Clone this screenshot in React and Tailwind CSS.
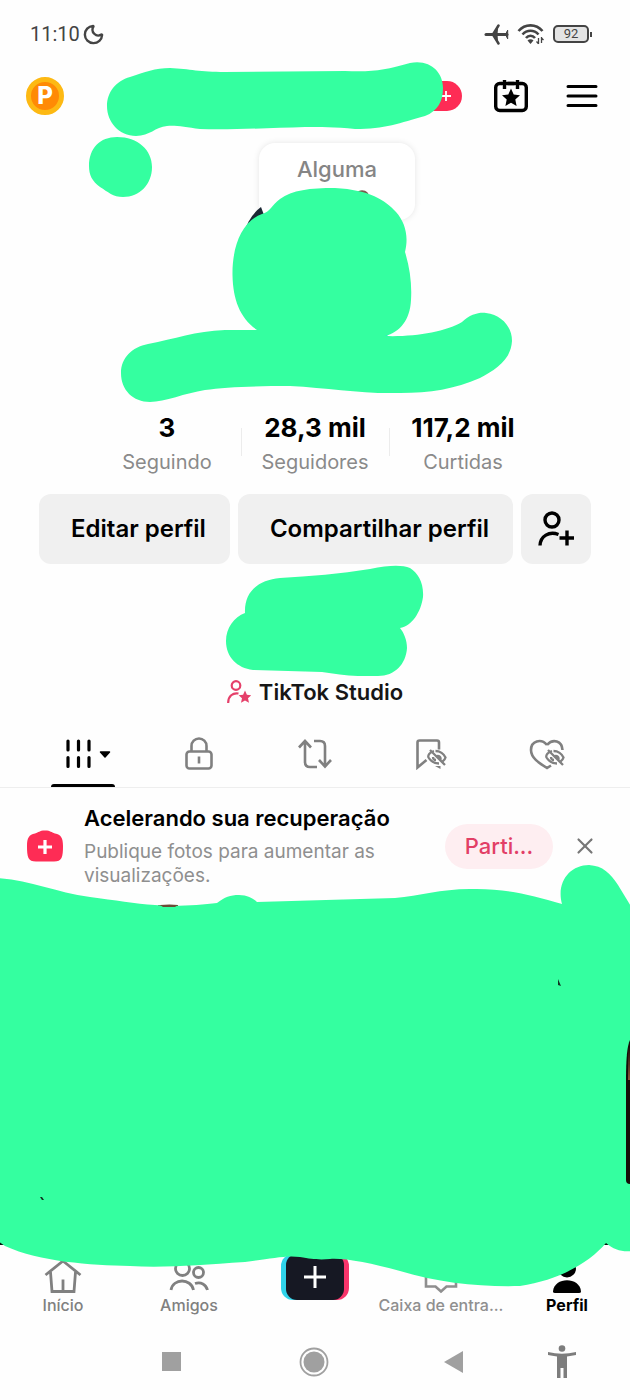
import { useState } from 'react';
import { Moon, X } from 'lucide-react';

const stats = [
  { value: '3', label: 'Seguindo' },
  { value: '28,3 mil', label: 'Seguidores' },
  { value: '117,2 mil', label: 'Curtidas' },
];

function StatusBar() {
  return (
    <div className="flex h-[66px] items-center justify-between pt-[2px] pl-[30px] pr-[38px] text-[#444]">
      <div className="flex items-center gap-[2px]">
        <span className="font-[Roboto] text-[20px]">11:10</span>
        <Moon size={23} strokeWidth={2.5} />
      </div>
      <div className="flex items-center gap-2">
        <svg width="25" height="21" viewBox="0 0 25 21" fill="none" stroke="currentColor" strokeLinecap="round" strokeLinejoin="round">
          <path d="M2 10.5h21" strokeWidth="3" />
          <path d="M14.5 1.5L9 10.5l5.500 9" strokeWidth="2.500" />
          <path d="M14.5 2v17L10 10.500z" fill="currentColor" stroke="none" opacity="0" />
          <path d="M13.5 3L8.500 10.500l5 7.500-.5-7.500z" fill="currentColor" strokeWidth="1" />
          <path d="M23.500 6.500l-2 4 2 4z" fill="currentColor" strokeWidth="1" />
        </svg>
        <svg width="28" height="22" viewBox="0 0 28 22" fill="none" stroke="currentColor" strokeWidth="2.600">
          <path d="M1.500 8C8 0.500 19 0.500 25.500 8M5.500 11.500C10 6.500 17 6.500 21.500 11.500M9 15c2.500-3 6.500-3 9 0" />
          <path d="M10.500 17.500a4 4 0 0 1 6 0l-3 3.500z" fill="currentColor" stroke="none" />
          <path d="M21.500 15v6M24.500 14v6M19.500 18.500l2 2.300M24.500 15l2 2" strokeWidth="1.300" />
        </svg>
        <div className="flex items-center gap-px">
          <div className="flex h-[18px] w-9 items-center justify-center rounded-[5px] border-2 border-[#444] bg-[#e4e4e4] font-[Roboto] text-[13px]">
            92
          </div>
          <div className="h-[5px] w-[2px] bg-[#444]" />
        </div>
      </div>
    </div>
  );
}

function Header() {
  return (
    <header className="flex h-[60px] items-center justify-between pl-[26px] pr-8">
      <div className="flex h-[38px] w-[38px] items-center justify-center rounded-full border-[5px] border-[#fdb913] bg-[#ff8a05] text-[24px] font-extrabold text-white">
        P
      </div>
      <div className="flex items-center">
        <div className="mr-8 flex h-[30px] w-12 items-center justify-end rounded-full bg-[#fe2c55] pr-[10px] text-white">
          <svg width="12" height="12" viewBox="0 0 12 12" stroke="currentColor" strokeWidth="1.800">
            <path d="M6 1v10M1 6h10" />
          </svg>
        </div>
        <button aria-label="Calendário" className="mr-[38px]">
          <svg width="34" height="34" viewBox="0 0 34 34" fill="none" stroke="#000" strokeWidth="3.400">
            <rect x="1.700" y="4.500" width="30.600" height="27" rx="4" />
            <path d="M10.500 0v11M23.500 0v11" stroke="#fefefe" strokeWidth="6" />
            <path d="M7 4.500h20" />
            <path d="M10.500 1v9M23.500 1v9" />
            <path d="M17 9.500l2.700 6 6.300.7-4.700 4.300 1.300 6.500-5.600-3.300-5.600 3.300 1.300-6.500L8 16.200l6.300-.7z" fill="#000" stroke="none" />
          </svg>
        </button>
        <button aria-label="Menu">
          <svg width="32" height="26" viewBox="0 0 32 26" stroke="#000" strokeWidth="3" strokeLinecap="round">
            <path d="M2 3.500h28M2 13h28M2 22.500h28" />
          </svg>
        </button>
      </div>
    </header>
  );
}

function TopScribble() {
  return (
    <svg
      className="pointer-events-none absolute left-1/2 top-0 h-[410px] w-[630px] -translate-x-1/2"
      viewBox="0 0 630 410"
      fill="#34ffa0"
    >
      <path d="M244 233c3-11 9-20 17-26l3 8-17 18z" fill="#1b2733" />
      <path d="M356 193c3-3 8-4 12 0l1 4h-12z" fill="#7a5a4c" />
      <path d="M375 334h14l-4 4h-12z" fill="#20d5ec" />
      <path d="M107 106C107 92 116 81 130 77C145 72 155 68 170 68C190 69 200 72 225 72L345 71C375 72 385 70 410 63C430 59 443 72 443 88C443 101 438 111 425 116C400 123 385 129 355 129C335 127 320 127 305 127C270 128 230 130 200 129C185 127 175 125 167 126C155 127 150 136 136 136C119 136 107 122 107 106Z" />
      <path d="M89 166C89 148 100 137 117 137C138 137 152 150 152 167C152 184 140 197 123 197C113 197 108 192 100 187C92 181 89 175 89 166Z" />
      <path d="M232.500 275C232 250 240 222 262 214C270 212 272 205 280 199C292 190 310 188 335 188C370 190 385 200 396 212C405 222 409 236 405 252C410 268 412 285 411 300C410 320 400 332 385 336C415 337 445 332 462 322C470 314 480 312 486 313C502 315 512 327 512 341C511 360 495 370 480 378C455 389 430 393 400 393C360 394 330 388 290 386C255 386 225 387 205 390C185 393 165 402 150 402C133 402 121 390 121 373C121 358 132 347 148 344C175 339 195 331 225 330L257 330C240 318 233 300 232.500 275Z" />
    </svg>
  );
}

function Stats() {
  return (
    <div className="mx-auto flex w-[444px] max-w-full">
      {stats.map((stat, i) => (
        <div key={stat.label} className="relative flex-1 text-center">
          <p className="text-[26px] leading-9 font-bold">{stat.value}</p>
          <p className="text-[20px] leading-8 text-[#8a8a8a]">{stat.label}</p>
          {i > 0 && <div className="absolute top-[18px] left-0 h-7 w-px bg-[#ececec]" />}
        </div>
      ))}
    </div>
  );
}

// crossed-out eye sitting on the corner of the saved and liked icons
function HiddenEye() {
  return (
    <g strokeWidth="2.300">
      <path d="M19 13C15 14 12.500 17 13.500 19.500C16 23.500 20 25.500 24 25.500" />
      <path d="M20.500 13C25 13 29 16 30.500 19.500C30 21.500 29 22.500 27.500 23.500" />
      <path d="M15 12L30 27M22 18C24 17.500 26 19 25.500 21.500M18 19c0 2 1.500 3 3 3" />
    </g>
  );
}

function Tabs() {
  const [active, setActive] = useState('Publicações');
  const tabs = [
    {
      name: 'Publicações',
      icon: (
        <svg width="46" height="30" viewBox="0 0 46 30" stroke="#000" strokeWidth="3.200" strokeLinecap="round">
          <path d="M3 2v9M13.500 2v9M24 2v9M3 18.500v9M13.500 18.500v9M24 18.500v9" />
          <path d="M35.500 13h9l-4.500 5z" fill="#000" strokeWidth="1.500" strokeLinejoin="round" />
        </svg>
      ),
    },
    {
      name: 'Privado',
      icon: (
        <svg width="28" height="34" viewBox="0 0 28 34" fill="none" stroke="#808080" strokeWidth="2.600">
          <rect x="1.500" y="14.500" width="25" height="17" rx="3" />
          <path d="M6.500 14V9a7.500 7.500 0 0 1 15 0v5M14 19.500v7" />
        </svg>
      ),
    },
    {
      name: 'Republicações',
      icon: (
        <svg width="34" height="32" viewBox="0 0 34 32" fill="none" stroke="#808080" strokeWidth="2.600">
          <path d="M1 9.500L7 3l6 6.500M7 4v20q0 5 5 5h7M16 3h6q5 0 5 5v20M21 22l6 6.500 6-6.500" />
        </svg>
      ),
    },
    {
      name: 'Salvos',
      icon: (
        <svg width="32" height="32" viewBox="0 0 32 32" fill="none" stroke="#808080" strokeWidth="2.600">
          <path d="M24 11.500V4.500q0-2-2-2H4.500q-2 0-2 2V29.500L11.500 22" />
          <path d="M20 28l5.500 3v-3z" fill="#808080" stroke="none" />
          <HiddenEye />
        </svg>
      ),
    },
    {
      name: 'Curtidos',
      icon: (
        <svg width="36" height="32" viewBox="0 0 36 32" fill="none" stroke="#808080" strokeWidth="2.600">
          <path d="M18 7C12 0 2 3 2 12c0 8 8 13 16 18l4-2.500M18 7c6-7 15-4 15.500 5" />
          <g transform="translate(4 0)">
            <HiddenEye />
          </g>
        </svg>
      ),
    },
  ];

  return (
    <nav className="flex border-b border-[#eee] px-[25px]">
      {tabs.map((tab) => (
        <button
          key={tab.name}
          aria-label={tab.name}
          onClick={() => setActive(tab.name)}
          className="flex h-[67px] flex-1 flex-col items-center justify-between"
        >
          <span className={tab.name === 'Publicações' ? 'flex h-16 items-center pt-1 pl-[10px]' : 'flex h-16 items-center pt-1'}>
            {tab.icon}
          </span>
          {active === tab.name && <span className="h-[3px] w-16 shrink-0 rounded-t bg-black" />}
        </button>
      ))}
    </nav>
  );
}

function RecoveryBanner() {
  const [open, setOpen] = useState(true);
  return (
    <section className="flex h-[113px] items-center pt-[3px] pr-9 pl-[26px]">
      {open && (
        <>
          <svg width="38" height="32" viewBox="0 0 38 32" className="mr-5 shrink-0">
            <path d="M9 3.500C13 2.500 13 0.500 19 0.500S25 2.500 29 3.500C35 4.500 37 8 37 16C37 27 36 31.500 28 31.500H10C2 31.500 1 27 1 16C1 8 3 4.500 9 3.500Z" fill="#fe2c55" />
            <path d="M19 10v14M12 17h14" stroke="#fff" strokeWidth="3.200" />
          </svg>
          <div className="flex-1">
            <h2 className="mb-2 text-[22px] leading-7 font-semibold whitespace-nowrap">Acelerando sua recuperação</h2>
            <p className="max-w-[310px] text-[19px] leading-6 text-[#8f8f8f]">
              Publique fotos para aumentar as visualizações.
            </p>
          </div>
          <button className="mr-[23px] h-[45px] w-[108px] shrink-0 rounded-full bg-[#feeef1] text-[22px] font-medium text-[#e23f66]">
            Parti...
          </button>
          <button aria-label="Fechar" onClick={() => setOpen(false)} className="shrink-0 text-[#777]">
            <X size={26} strokeWidth={2} className="-mx-1" />
          </button>
        </>
      )}
    </section>
  );
}

function Feed() {
  return (
    <section className="relative z-10 h-[344px]">
      <svg
        className="pointer-events-none absolute -top-[37px] left-0 h-[425px] w-full"
        viewBox="0 864 630 425"
        preserveAspectRatio="none"
      >
        <path d="M0 1235h12v10H0zM600 1238h16v7h-16z" fill="#07120c" />
        <path d="M158 905h20v3h-20z" fill="#6b4a35" />
        <path
          d="M-2 878C30 880 55 892 90 897C115 900 135 904 155 905C175 907 200 905 217 903C225 897 230 895 239 895C248 895 254 899 257 902L395 898C420 896 440 889 470 889C505 888 530 895 562 904C556 882 570 865 589 865C603 866 610 873 618 885L632 908V1251C622 1252 614 1250 606 1243C590 1262 560 1280 520 1286C480 1287 440 1283 400 1271C370 1263 345 1258 330 1259C318 1260 312 1259 300 1257C285 1255 270 1259 245 1262C200 1265 165 1268 130 1266C90 1265 40 1262 5 1246L-2 1241Z"
          fill="#34ffa0"
        />
        <path d="M160 905q10-1 18 0l-3 2h-12z" fill="#6b4a35" />
        <path d="M630 1040c-3 6-4 20-4 40v100q0 4 4 4z" fill="#160c08" />
        <path d="M629 1046l1 34h-2z" fill="#8a5238" />
        <path d="M558 979l3 7-3-1zM40 1197l2 0 2 3-2 0z" fill="#123322" />
      </svg>
    </section>
  );
}

function BottomNav() {
  return (
    <nav className="grid h-[74px] grid-cols-5 text-[16px] leading-5 font-medium text-[#808080]">
      <button className="flex flex-col items-center justify-end pb-1">
        <svg width="38" height="38" viewBox="0 0 38 38" fill="none" stroke="currentColor" strokeWidth="2.800">
          <path d="M1.500 18L19 4l17.500 14M6.500 15L8 34.500h22L31.500 15M19 22.500v12" />
        </svg>
        Início
      </button>
      <button className="flex flex-col items-center justify-end pb-1">
        <svg width="40" height="38" viewBox="0 0 40 38" fill="none" stroke="currentColor" strokeWidth="2.800">
          <circle cx="13.500" cy="11.500" r="7" />
          <circle cx="29.500" cy="15.500" r="5" />
          <path d="M2 33c2-12 20-12 22.500 0M26 26.500c6-2 11 1 12.500 6.500" />
        </svg>
        Amigos
      </button>
      <button aria-label="Criar" className="flex justify-center pt-[9px]">
        <svg width="68" height="46" viewBox="0 0 68 46">
          <rect x="0" y="0" width="40" height="46" rx="12" fill="#2fd3ea" />
          <rect x="28" y="0" width="40" height="46" rx="12" fill="#f7356b" />
          <rect x="5" y="0" width="58" height="46" rx="11" fill="#161823" />
          <path d="M34 12v22M23 23h22" stroke="#fff" strokeWidth="3" />
        </svg>
      </button>
      <button className="flex flex-col items-center justify-end pb-1 whitespace-nowrap text-[#8f8f8f]">
        <svg width="34" height="38" viewBox="0 0 34 38" fill="none" stroke="currentColor" strokeWidth="2.600">
          <path d="M2 5h30v24.500h-9.500l-5.500 5-5.500-5H2z" />
        </svg>
        Caixa de entra...
      </button>
      <button className="flex flex-col items-center justify-end pb-1 font-bold text-black">
        <svg width="30" height="38" viewBox="0 0 30 38" fill="currentColor">
          <circle cx="15" cy="11.500" r="9" />
          <path d="M1 34.500C2 19.500 28 19.500 29 34.500Q29 36 27 36H3Q1 36 1 34.500Z" />
        </svg>
        Perfil
      </button>
    </nav>
  );
}

function SystemNav() {
  return (
    <div className="grid h-[81px] grid-cols-[1fr_140px_140px_140px_1fr] items-center justify-items-center pt-1">
      <span />
      <button aria-label="Recentes" className="mr-2 h-[19px] w-[19px] bg-[#a0a0a0]" />
      <button aria-label="Tela inicial" className="mr-[2px]">
        <svg width="30" height="30" viewBox="0 0 30 30">
          <circle cx="15" cy="15" r="13.500" fill="none" stroke="#a0a0a0" strokeWidth="1.800" />
          <circle cx="15" cy="15" r="10.500" fill="#a0a0a0" />
        </svg>
      </button>
      <button aria-label="Voltar" className="mr-1">
        <svg width="19" height="22" viewBox="0 0 19 22" fill="#a0a0a0">
          <path d="M19 0v22L0 11z" />
        </svg>
      </button>
      <button aria-label="Acessibilidade" className="mr-8">
        <svg width="28" height="33" viewBox="0 0 28 33" fill="#7d7d7d">
          <circle cx="14" cy="3.500" r="3.300" />
          <path d="M0 7q14 3.500 28 0l.3 3q-4.500 1-9.300 1.500V33h-3.500V23h-3v10H9V11.500Q4 11-.3 10z" />
        </svg>
      </button>
    </div>
  );
}

export default function App() {
  return (
    <div className="min-h-screen overflow-x-hidden bg-[#fefefe] font-[Inter,sans-serif] text-black">
      <div className="relative">
        <StatusBar />
        <Header />
        <div className="flex h-[284px] justify-center pt-[17px] pl-11">
          <div className="h-[77px] w-[156px] rounded-2xl bg-white pt-3 text-center text-[22px] leading-7 font-medium text-[#858585] shadow-[0_0_6px_rgba(0,0,0,0.1)]">
            Alguma
          </div>
        </div>
        <TopScribble />
      </div>

      <Stats />

      <div className="mt-4 flex h-[70px] gap-2 px-[39px] text-[24px] font-semibold">
        <button className="flex-auto rounded-xl bg-[#f0f0f0] pl-2">Editar perfil</button>
        <button className="flex-auto rounded-xl bg-[#f0f0f0] pl-2">Compartilhar perfil</button>
        <button aria-label="Adicionar amigos" className="flex w-[70px] shrink-0 items-center justify-center rounded-xl bg-[#f0f0f0]">
          <svg width="36" height="36" viewBox="0 0 36 36" fill="none" stroke="#000" strokeWidth="3.400">
            <circle cx="14" cy="9" r="7" />
            <path d="M2 34.500C2.500 25 11 20 20.500 23.500M29 19.500v15M21.500 27H36" />
          </svg>
        </button>
      </div>

      <div className="flex h-[112px] justify-center">
        <svg width="198" height="112" viewBox="226 564 198 112" fill="#34ffa0" className="ml-[19px]">
          <path d="M245 613C244 592 258 580 280 578C310 576 340 574 370 569C390 565 402 565 410 568C418 573 424 583 423 597C421 612 412 626 400 628C404 633 407 640 407 648C406 664 395 676 378 676C360 677 340 675 322 672L253 670C237 668 226 657 226 641C226 628 234 617 245 613Z" />
        </svg>
      </div>

      <a href="#studio" className="flex h-8 items-center justify-center gap-2 text-[22px] font-semibold text-[#161616]">
        <svg width="24" height="24" viewBox="0 0 24 24" fill="none" stroke="#e5406a" strokeWidth="2.200">
          <circle cx="9" cy="5.500" r="4.300" />
          <path d="M1.200 23C1 16 6 12.500 11.500 13.500" />
          <path d="M18 10.500l1.900 4.200 4.500.5-3.400 3 1 4.500-4-2.300-4 2.300 1-4.500-3.400-3 4.500-.5z" fill="#e5406a" stroke="none" />
        </svg>
        TikTok Studio
      </a>

      <div className="mt-3">
        <Tabs />
      </div>
      <RecoveryBanner />
      <Feed />
      <BottomNav />
      <SystemNav />
    </div>
  );
}
